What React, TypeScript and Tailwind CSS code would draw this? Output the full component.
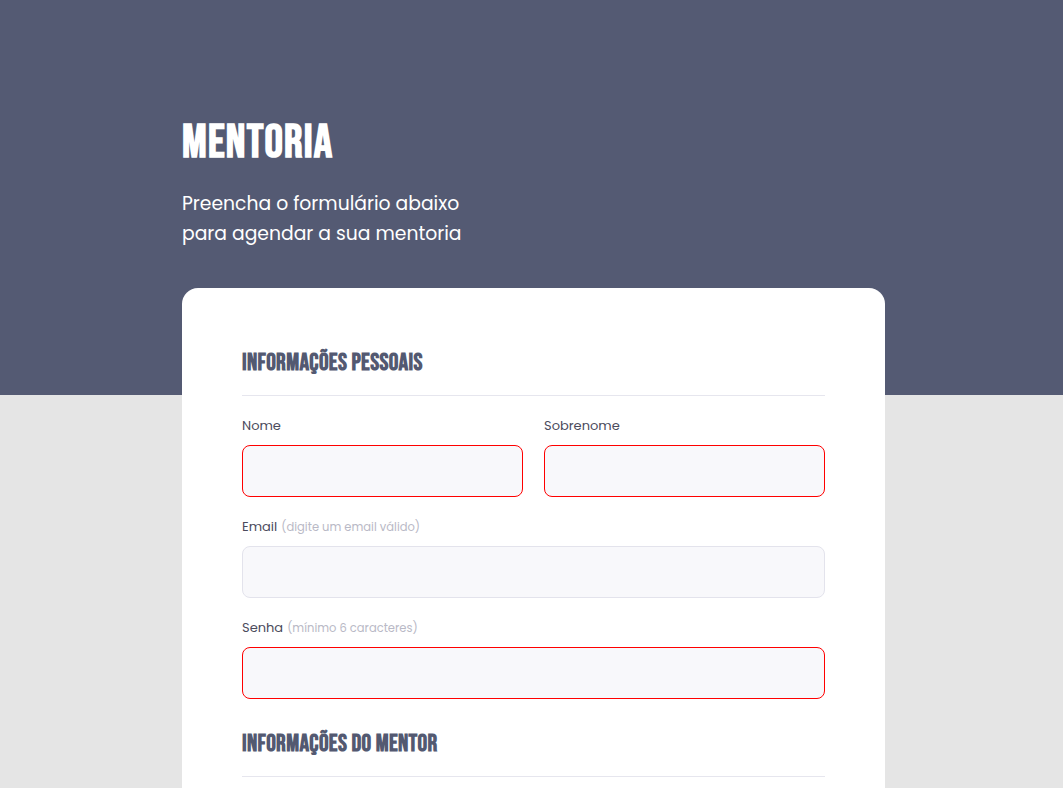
const heading = { fontFamily: '"Bebas Neue", "Barlow Condensed", Oswald, "DejaVu Sans Condensed", sans-serif' }
const body = { fontFamily: 'Poppins, "Open Sans", "Liberation Sans", sans-serif' }

interface FieldProps {
	label: string
	hint?: string
	invalid?: boolean
	type?: string
}

function Field({ label, hint, invalid, type = 'text' }: FieldProps) {
	return (
		<div className="flex flex-col pt-px">
			<label className="flex items-baseline h-5 text-[13px] leading-5 text-[#4b4b5c] mb-[9px]">
				{label}
				{hint && <span className="ml-1 text-[11.5px] text-[#b9b9c6]">({hint})</span>}
			</label>
			<input
				type={type}
				className={`h-[52px] w-full rounded-lg bg-[#f8f8fb] px-4 outline-none border ${invalid ? 'border-[#ff0000]' : 'border-[#e3e3ec]'}`}
			/>
		</div>
	)
}

function SectionTitle({ children }: { children: string }) {
	return (
		<div className="border-b border-[#e6e6ee] pb-[17px] mb-[19px]">
			<h2 className="text-[24px] leading-[30px] font-bold tracking-[0.35px] text-[#535971]" style={heading}>{children}</h2>
		</div>
	)
}

export default function App() {
	return (
		<div className="h-[788px] overflow-hidden bg-[#e5e5e5]" style={body}>
			<div className="bg-[#545a73] h-[395px]">
				<div className="pl-[182px] pt-[118px]">
					<h1 className="text-[46px] leading-[52px] font-bold tracking-[1.2px] text-white" style={heading}>MENTORIA</h1>
					<p className="mt-[19px] text-[18.75px] leading-[30px] text-white">
						Preencha o formulário abaixo<br />para agendar a sua mentoria
					</p>
				</div>
			</div>
			<div className="-mt-[107px] ml-[182px] w-[703px] rounded-2xl bg-white px-[60px] pt-[60px] pb-10">
				<SectionTitle>INFORMAÇÕES PESSOAIS</SectionTitle>
				<div className="grid grid-cols-2 gap-x-[21px]">
					<Field label="Nome" invalid />
					<Field label="Sobrenome" invalid />
				</div>
				<div className="mt-[19px]">
					<Field label="Email" hint="digite um email válido" type="email" />
				</div>
				<div className="mt-[19px]">
					<Field label="Senha" hint="mínimo 6 caracteres" type="password" invalid />
				</div>
				<div className="mt-[30px]">
					<SectionTitle>INFORMAÇÕES DO MENTOR</SectionTitle>
				</div>
			</div>
		</div>
	)
}
